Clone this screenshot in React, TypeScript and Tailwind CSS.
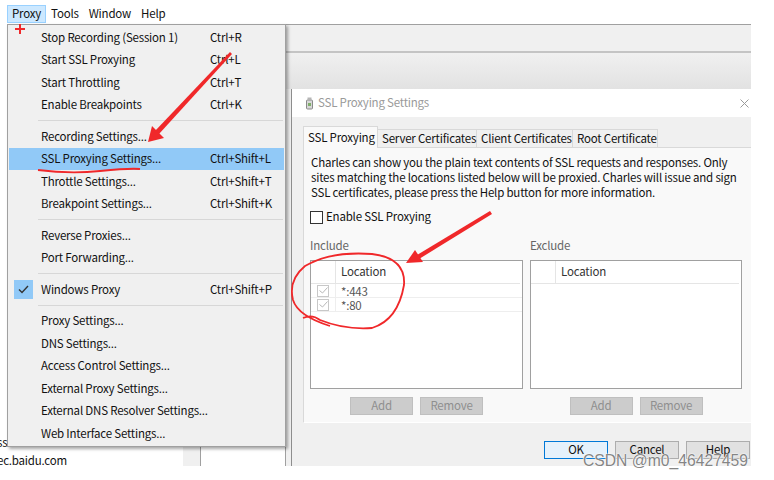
import React from "react";

type Item =
  | { label: string; keys?: string; active?: boolean; checked?: boolean }
  | "sep";

const proxyMenu: Item[] = [
  { label: "Stop Recording (Session 1)", keys: "Ctrl+R" },
  { label: "Start SSL Proxying", keys: "Ctrl+L" },
  { label: "Start Throttling", keys: "Ctrl+T" },
  { label: "Enable Breakpoints", keys: "Ctrl+K" },
  "sep",
  { label: "Recording Settings..." },
  { label: "SSL Proxying Settings...", keys: "Ctrl+Shift+L", active: true },
  { label: "Throttle Settings...", keys: "Ctrl+Shift+T" },
  { label: "Breakpoint Settings...", keys: "Ctrl+Shift+K" },
  "sep",
  { label: "Reverse Proxies..." },
  { label: "Port Forwarding..." },
  "sep",
  { label: "Windows Proxy", keys: "Ctrl+Shift+P", checked: true },
  "sep",
  { label: "Proxy Settings..." },
  { label: "DNS Settings..." },
  { label: "Access Control Settings..." },
  { label: "External Proxy Settings..." },
  { label: "External DNS Resolver Settings..." },
  { label: "Web Interface Settings..." },
];

const includeRows = ["*:443", "*:80"];

function ProxyMenu() {
  return (
    <div className="absolute left-[7px] top-[24px] w-[279px] h-[423px] bg-[#f0f0f0] border border-[#a0a0a0] pt-[1px] shadow-[2px_2px_3px_rgba(0,0,0,0.35)]">
      {proxyMenu.map((item, i) =>
        item === "sep" ? (
          <div key={i} className="h-[9px] flex items-center ml-[30px] mr-[2px]">
            <div className="w-full border-t border-[#d7d7d7]" />
          </div>
        ) : (
          <div
            key={i}
            className={`mx-[1px] h-[22.5px] flex items-center ${
              item.active ? "bg-[#91c9f7]" : ""
            }`}
          >
            <div className="w-[32px] h-full flex items-center">
              {item.checked && (
                <div className="ml-[5px] w-[19px] h-[19px] bg-[#91c9f7] flex items-center justify-center">
                  <svg width="11" height="9" viewBox="0 0 11 9">
                    <path d="M1 4.5 L4 7.5 L10 1" fill="none" stroke="#333" strokeWidth="1.4" />
                  </svg>
                </div>
              )}
            </div>
            <div className="w-[169px] whitespace-nowrap">{item.label}</div>
            <div className="whitespace-nowrap">{item.keys}</div>
          </div>
        )
      )}
    </div>
  );
}

function ListTable({ rows }: { rows: string[] }) {
  return (
    <div className="h-[129px] bg-white border border-[#a0a0a0] flex flex-col">
      <div className="h-[23px] flex border-b border-[#e5e5e5] mr-[2px]">
        <div className="w-[25px] border-r border-[#e5e5e5]" />
        <div className="flex-1 flex items-center pl-[5px] text-[#333]">Location</div>
      </div>
      {rows.map((r) => (
        <div key={r} className="h-[14px] flex items-center border-b border-[#eeeeee]">
          <div className="w-[25px] h-full flex items-center justify-center border-r border-[#eeeeee]">
            <div className="w-[12px] h-[12px] border border-[#c8c8c8] flex items-center justify-center">
              <svg width="9" height="7" viewBox="0 0 9 7">
                <path d="M0.5 3.5 L3.5 6 L8.5 0.5" fill="none" stroke="#b8b8b8" strokeWidth="1" />
              </svg>
            </div>
          </div>
          <div className="pl-[5px] text-[#555] leading-[14px]">{r}</div>
        </div>
      ))}
    </div>
  );
}

function DisabledButtons() {
  return (
    <div className="flex justify-center gap-[7px]">
      <div className="w-[63px] h-[18px] bg-[#cccccc] border border-[#bfbfbf] flex items-center justify-center text-[#8f8f8f]">
        Add
      </div>
      <div className="w-[63px] h-[18px] bg-[#cccccc] border border-[#bfbfbf] flex items-center justify-center text-[#8f8f8f]">
        Remove
      </div>
    </div>
  );
}

function SslDialog() {
  return (
    <div className="absolute left-[291px] top-[89px] w-[460px] h-[377px] overflow-hidden border-l border-[#8e8e8e] bg-[#f0f0f0] flex flex-col">
      {/* title bar */}
      <div className="h-[28px] shrink-0 bg-white flex items-center pl-[13px] pr-[1px]">
        <svg width="9" height="13" viewBox="0 0 9 13">
          <rect x="1.5" y="3" width="6" height="9" rx="1" fill="#d8d8d8" stroke="#8a8a8a" />
          <rect x="2.5" y="0.5" width="4" height="2.5" fill="#b5b5b5" />
          <rect x="3" y="6" width="3" height="3" fill="#7fae6a" />
        </svg>
        <div className="ml-[4px] text-[#9a9a9a]">SSL Proxying Settings</div>
        <svg className="ml-auto mr-[1px]" width="9" height="9" viewBox="0 0 9 9">
          <path d="M0.5 0.5 L8.5 8.5 M8.5 0.5 L0.5 8.5" stroke="#9a9a9a" strokeWidth="1" />
        </svg>
      </div>

      <div className="pl-[11px] pt-[9px]">
        {/* tabs */}
        <div className="h-[21px] flex items-end whitespace-nowrap">
          <div className="relative z-10 h-[22px] -mb-[1px] px-[4px] bg-[#f9f9f9] border border-b-0 border-[#d9d9d9] flex items-center w-[75px]">
            SSL Proxying
          </div>
          <div className="h-[18px] px-[4px] border-t border-r border-[#d9d9d9] flex items-center w-[99px]">
            Server Certificates
          </div>
          <div className="h-[18px] px-[4px] border-t border-r border-[#d9d9d9] flex items-center w-[96px]">
            Client Certificates
          </div>
          <div className="h-[18px] px-[4px] border-t border-r border-[#d9d9d9] flex items-center w-[85px]">
            Root Certificate
          </div>
        </div>

        {/* tab panel */}
        <div className="w-[460px] h-[276px] bg-[#f9f9f9] border border-[#d9d9d9] border-b-white pl-[6px] pt-[7px]">
          <div className="pl-[1px] leading-[15px] whitespace-nowrap">
            <div>Charles can show you the plain text contents of SSL requests and responses. Only</div>
            <div>sites matching the locations listed below will be proxied. Charles will issue and sign</div>
            <div>SSL certificates, please press the Help button for more information.</div>
          </div>

          <div className="mt-[10px] h-[14px] flex items-center">
            <div className="w-[13px] h-[13px] bg-white border border-[#333]" />
            <div className="ml-[3px]">Enable SSL Proxying</div>
          </div>

          <div className="mt-[15px] flex gap-[7px]">
            <div className="w-[213px]">
              <div className="h-[14px] flex items-center text-[#666]">Include</div>
              <div className="mt-[7px]">
                <ListTable rows={includeRows} />
              </div>
              <div className="mt-[8px]">
                <DisabledButtons />
              </div>
            </div>
            <div className="w-[212px]">
              <div className="h-[14px] flex items-center text-[#666]">Exclude</div>
              <div className="mt-[7px]">
                <ListTable rows={[]} />
              </div>
              <div className="mt-[8px]">
                <DisabledButtons />
              </div>
            </div>
          </div>
        </div>

        {/* dialog buttons */}
        <div className="mt-[18px] flex justify-end gap-[7px] pr-[1px]">
          <div className="w-[64px] h-[18px] bg-[#e5f1fb] border border-[#0078d7] flex items-center justify-center">
            OK
          </div>
          <div className="w-[64px] h-[18px] bg-[#e1e1e1] border border-[#adadad] flex items-center justify-center">
            Cancel
          </div>
          <div className="w-[64px] h-[18px] bg-[#e1e1e1] border border-[#adadad] flex items-center justify-center">
            Help
          </div>
        </div>
      </div>
    </div>
  );
}

function Annotations() {
  return (
    <svg className="absolute inset-0 pointer-events-none" width="774" height="480" viewBox="0 0 774 480">
      {/* plus */}
      <path d="M15 29 H25 M20 24 V34" stroke="#f0282a" strokeWidth="2" />
      {/* arrow to menu item */}
      <polygon points="230,52 232,54 159,134 155,131" fill="#f0282a" />
      <polygon points="148,142 152,126 164,138" fill="#f0282a" />
      {/* underline */}
      <path d="M38 170 Q 70 174 100 171 T 140 169" fill="none" stroke="#f0282a" strokeWidth="1.8" />
      {/* circle */}
      <path
        d="M303 318 Q 312 314 320 320 Q 345 330 372 328 Q 398 320 404 285 Q 406 258 372 254 Q 330 251 305 266 Q 288 280 293 300 Q 298 316 330 326"
        fill="none"
        stroke="#f0282a"
        strokeWidth="1.8"
      />
      {/* arrow to table */}
      <polygon points="490,211 492,214 419,259 417,255" fill="#f0282a" />
      <polygon points="406,263 415,250 423,262" fill="#f0282a" />
    </svg>
  );
}

export default function App() {
  return (
    <div className="relative w-[774px] h-[480px] bg-white overflow-hidden text-[11.5px] tracking-[-0.2px] text-[#111] font-['Noto_Sans_CJK_SC','Noto_Sans',sans-serif]">
      {/* main Charles window behind */}
      <div className="w-[751px] h-[466px] overflow-hidden flex flex-col">
        <div className="h-[24px] shrink-0 bg-white flex items-start pt-[5px] pl-[7px]">
          <div className="h-[18px] px-[4px] bg-[#cce8ff] border border-[#99d1ff] flex items-center">Proxy</div>
          <div className="h-[18px] px-[4px] border border-transparent flex items-center">Tools</div>
          <div className="h-[18px] px-[4px] border border-transparent flex items-center">Window</div>
          <div className="h-[18px] px-[4px] border border-transparent flex items-center">Help</div>
        </div>
        <div className="flex-1 flex">
          <div className="w-[183px] bg-white flex flex-col justify-end -mb-[2px]">
            <div className="h-[16px] leading-[16px] -ml-[3px] mb-[2px] whitespace-nowrap">ss0.bdstatic.com</div>
            <div className="h-[16px] leading-[16px] -ml-[3px] whitespace-nowrap">ec.baidu.com</div>
          </div>
          <div className="w-[18px] bg-[#f0f0f0] border-r border-[#a0a0a0]" />
          <div className="w-[84px] bg-white" />
          <div className="flex-1 border-l border-t border-[#a0a0a0] bg-[#f0f0f0] flex flex-col">
            <div className="h-[28px] border-b-2 border-[#c4c4c4]" />
            <div className="h-[36px] bg-gradient-to-b from-[#f0f0f0] to-[#e2e2e2]" />
            <div className="flex-1" />
          </div>
        </div>
      </div>

      <SslDialog />
      <ProxyMenu />
      <Annotations />

      <div className="absolute left-[583px] top-[451px] text-[15.7px] leading-[20px] tracking-normal text-[#858585] font-['Liberation_Sans',sans-serif] [text-shadow:0_0_1px_#fff,0_0_1px_#fff,0_0_2px_#fff]">
        CSDN @m0_46427459
      </div>
    </div>
  );
}
